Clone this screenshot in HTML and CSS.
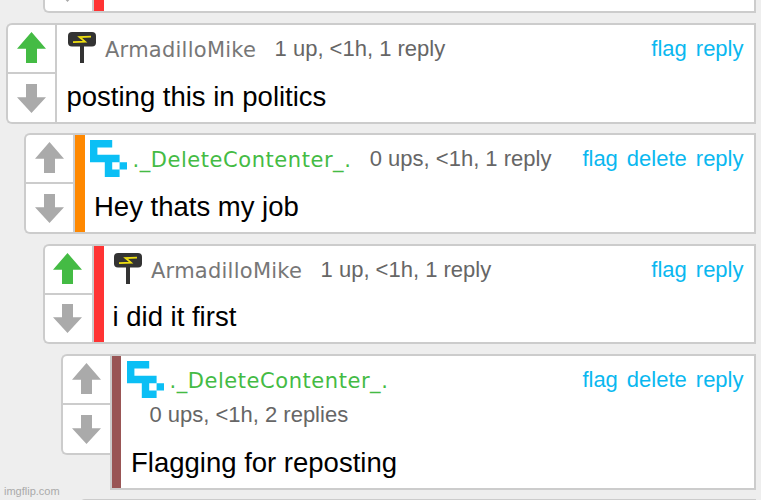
FILE: index.html
```html
<!DOCTYPE html>
<html lang="en">
<head>
    <meta charset="UTF-8">
    <meta name="viewport" content="width=device-width, initial-scale=1.0">
    <title>Comments</title>
    <link rel="stylesheet" href="styles.css">
</head>
<body>
    <svg class="sprites" width="0" height="0">
        <symbol id="up" viewBox="0 0 29 31">
            <path d="M14.5 0L29 16.7H20V31H9V16.7H0z"/>
        </symbol>
        <symbol id="down" viewBox="0 0 29 29">
            <path d="M9 0H20V13.3H29L14.5 29L0 13.3H9z"/>
        </symbol>
        <symbol id="mic" viewBox="0 0 28 31">
            <path fill="#333" d="M12 13h4v18h-4z"/>
            <rect fill="#333" width="28" height="14.5" rx="4"/>
            <path fill="none" stroke="#eedf11" stroke-width="1.8" d="M23 4.6L11.5 5L17 9.6L5 10.2"/>
        </symbol>
        <symbol id="pixels" viewBox="0 0 5 5">
            <path fill="#0bbff5" fill-rule="evenodd" d="M0 0H3V1H1V2H4V3H5V4H4V5H2V3H0zM3 3V4H4V3z"/>
        </symbol>
    </svg>

    <div class="thread">
        <div class="comment level-3">
            <div class="votes">
                <div class="vote"><svg class="up"><use href="#up"/></svg></div>
                <div class="vote"><svg class="down"><use href="#down"/></svg></div>
            </div>
            <div class="body red"></div>
        </div>

        <div class="comment level-1">
            <div class="votes">
                <div class="vote"><svg class="up voted"><use href="#up"/></svg></div>
                <div class="vote"><svg class="down"><use href="#down"/></svg></div>
            </div>
            <div class="body">
                <div class="head">
                    <div class="info">
                        <div class="user"><svg class="mic"><use href="#mic"/></svg><span class="name">ArmadilloMike</span></div>
                        <span class="meta">1 up, &lt;1h, 1 reply</span>
                    </div>
                    <div class="links"><a>flag</a><a>reply</a></div>
                </div>
                <p class="text">posting this in politics</p>
            </div>
        </div>

        <div class="comment level-2">
            <div class="votes">
                <div class="vote"><svg class="up"><use href="#up"/></svg></div>
                <div class="vote"><svg class="down"><use href="#down"/></svg></div>
            </div>
            <div class="body orange">
                <div class="head">
                    <div class="info">
                        <div class="user"><svg class="pixels"><use href="#pixels"/></svg><span class="name green">._DeleteContenter_.</span></div>
                        <span class="meta">0 ups, &lt;1h, 1 reply</span>
                    </div>
                    <div class="links"><a>flag</a><a>delete</a><a>reply</a></div>
                </div>
                <p class="text">Hey thats my job</p>
            </div>
        </div>

        <div class="comment level-3">
            <div class="votes">
                <div class="vote"><svg class="up voted"><use href="#up"/></svg></div>
                <div class="vote"><svg class="down"><use href="#down"/></svg></div>
            </div>
            <div class="body red">
                <div class="head">
                    <div class="info">
                        <div class="user"><svg class="mic"><use href="#mic"/></svg><span class="name">ArmadilloMike</span></div>
                        <span class="meta">1 up, &lt;1h, 1 reply</span>
                    </div>
                    <div class="links"><a>flag</a><a>reply</a></div>
                </div>
                <p class="text">i did it first</p>
            </div>
        </div>

        <div class="comment level-4">
            <div class="votes">
                <div class="vote"><svg class="up"><use href="#up"/></svg></div>
                <div class="vote"><svg class="down"><use href="#down"/></svg></div>
            </div>
            <div class="body brown">
                <div class="head">
                    <div class="info">
                        <div class="user"><svg class="pixels"><use href="#pixels"/></svg><span class="name green">._DeleteContenter_.</span></div>
                        <span class="meta">0 ups, &lt;1h, 2 replies</span>
                    </div>
                    <div class="links"><a>flag</a><a>delete</a><a>reply</a></div>
                </div>
                <p class="text">Flagging for reposting</p>
            </div>
        </div>

        <div class="comment level-5">
            <div class="votes"></div>
            <div class="body"></div>
        </div>
    </div>
    <div class="watermark">imgflip.com</div>
</body>
</html>
```

FILE: styles.css
```css
* {
    margin: 0;
    padding: 0;
    box-sizing: border-box;
}

body {
    position: relative;
    height: 500px;
    overflow: hidden;
    background: #eee;
    font-family: "Liberation Sans", Arial, Helvetica, sans-serif;
}

.sprites {
    display: block;
}

.thread {
    display: flex;
    flex-direction: column;
    gap: 9.8px;
    height: 587.4px;
    margin-top: -87.4px;
    padding-right: 5.5px;
    overflow: hidden;
}

.comment {
    display: flex;
    align-items: flex-start;
    flex-shrink: 0;
    min-height: 100.6px;
}

.level-1 { margin-left: 6px; }
.level-2 { margin-left: 24px; }
.level-3 { margin-left: 42.5px; }
.level-4 { margin-left: 61px; }
.level-5 { margin-left: 79px; }

.votes {
    flex: none;
    width: 49px;
    height: 100.6px;
    border: 2px solid #ccc;
    border-right: 0;
    border-radius: 6px 0 0 6px;
    background: #fff;
}

.vote {
    display: flex;
    justify-content: center;
    height: 47px;
    padding: 7px 1px 0 0;
}

.vote + .vote {
    height: 49px;
    padding-top: 9.5px;
    border-top: 2px solid #ccc;
}

.vote svg {
    width: 29px;
    height: 31px;
    fill: #aaa;
}

.vote .down {
    height: 29px;
}

.vote .voted {
    fill: #4b4;
}

.body {
    display: flex;
    flex-direction: column;
    flex: 1;
    align-self: stretch;
    padding: 6px 10px 0 9.5px;
    border: 2px solid #ccc;
    background: #fff;
}

.red, .orange, .brown {
    padding-left: 19px;
    background: linear-gradient(to right, currentColor 9.5px, #fff 9.5px);
}

.red { color: #f33; }
.orange { color: #f80; }
.brown { color: #955; }

.head {
    display: flex;
    justify-content: space-between;
    align-items: flex-start;
}

.info {
    display: flex;
    flex-wrap: wrap;
    flex: 1;
}

.user {
    display: flex;
    height: 35px;
}

.mic {
    width: 28px;
    height: 31px;
    margin: 1px 9px 0 1.5px;
}

.pixels {
    width: 37px;
    height: 37px;
    margin: -1px 5.5px 0 -4px;
}

.name {
    font-family: "DejaVu Sans", Verdana, sans-serif;
    font-size: 21px;
    line-height: 39px;
    letter-spacing: 0.25px;
    color: #777;
}

.green {
    letter-spacing: 0.55px;
    color: #4b4;
}

.meta {
    margin-left: 18.4px;
    font-size: 22px;
    line-height: 35px;
    white-space: nowrap;
    color: #666;
}

.links {
    display: flex;
    gap: 9px;
    font-size: 22px;
    line-height: 35px;
    color: #0ab8f0;
}

.text {
    margin-top: 15.7px;
    font-size: 27.5px;
    line-height: 30px;
    color: #000;
}

.level-4 .body {
    height: 135.4px;
}

.watermark {
    position: absolute;
    left: 4px;
    bottom: 2px;
    font-size: 11px;
    line-height: 13px;
    color: #aaa;
}
```
